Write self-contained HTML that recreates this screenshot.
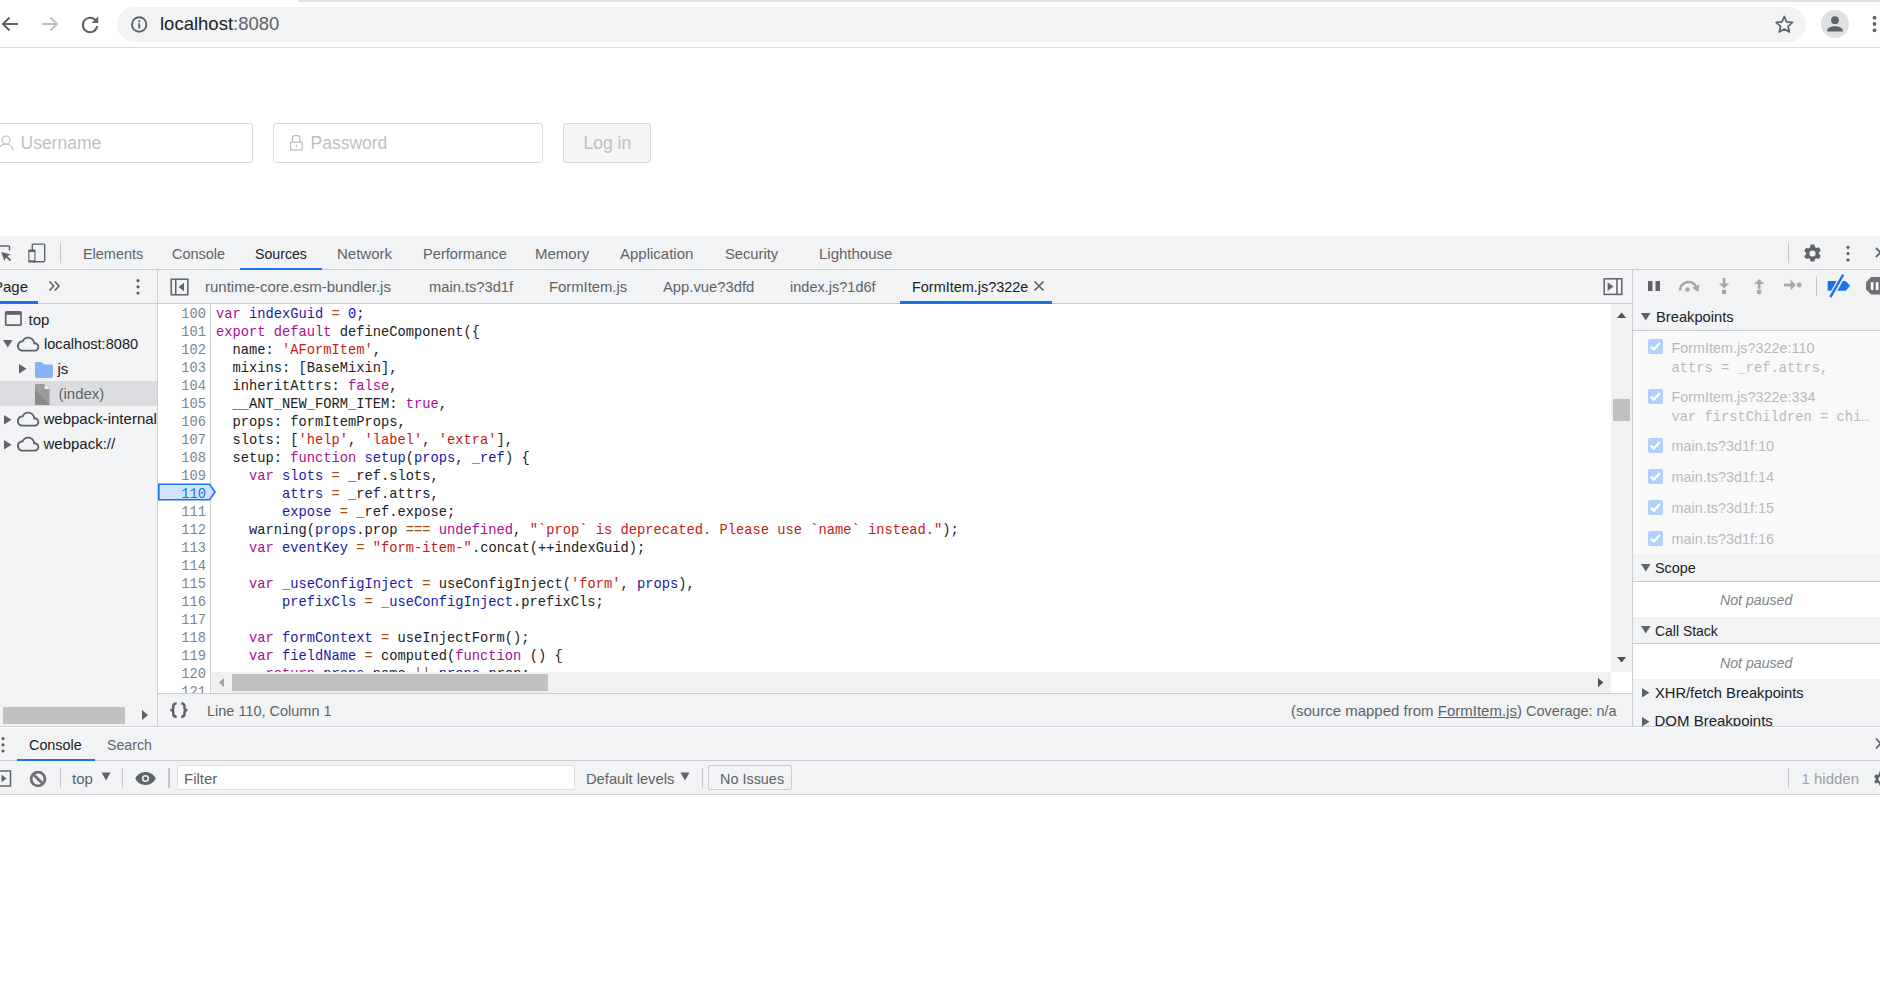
<!DOCTYPE html>
<html><head><meta charset="utf-8"><style>
html,body{margin:0;padding:0;width:1880px;height:986px;overflow:hidden;background:#fff}
.a{position:absolute;box-sizing:border-box}
.s{font-family:"Liberation Sans",sans-serif;white-space:pre}
.m{font-family:"Liberation Mono",monospace;white-space:pre}
svg.a{overflow:visible}
</style></head><body>
<div class="a" style="left:0px;top:0px;width:1880px;height:47px;background:#ffffff;"></div>
<div class="a" style="left:298px;top:0px;width:1582px;height:2px;background:#dee1e6;border-bottom-left-radius:6px;"></div>
<div class="a" style="left:0px;top:47px;width:1880px;height:1px;background:#dadce0;"></div>
<svg class="a" style="left:0px;top:14px;" width="20" height="20" viewBox="0 0 20 20"><path d="M18 10H3.5M9.5 3.5L3 10l6.5 6.5" fill="none" stroke="#5f6368" stroke-width="2"/></svg>
<svg class="a" style="left:40px;top:14px;" width="20" height="20" viewBox="0 0 20 20"><path d="M2 10h14.5M10.5 3.5L17 10l-6.5 6.5" fill="none" stroke="#bdc1c6" stroke-width="2"/></svg>
<svg class="a" style="left:79px;top:14px;" width="22" height="22" viewBox="0 0 22 22"><path d="M17.2 7.2A7.2 7.2 0 1 0 18.2 12" fill="none" stroke="#5f6368" stroke-width="2"/><path d="M19.2 2.5v6.5h-6.5z" fill="#5f6368"/></svg>
<div class="a" style="left:117px;top:7px;width:1689px;height:35px;background:#f1f3f4;border-radius:17.5px;"></div>
<svg class="a" style="left:130px;top:15px;" width="19" height="19" viewBox="0 0 19 19"><circle cx="9.2" cy="9.5" r="7.2" fill="none" stroke="#5f6368" stroke-width="1.9"/><rect x="8.3" y="8.2" width="1.9" height="5.3" fill="#5f6368"/><rect x="8.3" y="5.3" width="1.9" height="1.9" fill="#5f6368"/></svg>
<div class="a s" style="left:160px;top:12.19px;font-size:18.5px;line-height:24px;color:#202124;">localhost<span style="color:#5f6368">:8080</span></div>
<svg class="a" style="left:1773px;top:13px;" width="22" height="22" viewBox="0 0 22 22"><path d="M11.30 3.50L13.59 8.94L19.48 9.44L15.01 13.31L16.35 19.06L11.30 16.00L6.25 19.06L7.59 13.31L3.12 9.44L9.01 8.94z" fill="none" stroke="#5f6368" stroke-width="1.7" stroke-linejoin="round"/></svg>
<svg class="a" style="left:1821px;top:10px;" width="28" height="28" viewBox="0 0 28 28"><circle cx="14" cy="14" r="14" fill="#dfe1e5"/><circle cx="14" cy="10.2" r="3.9" fill="#5f6368"/><path d="M6.2 21.5v-1.2c0-2.6 5.2-4 7.8-4s7.8 1.4 7.8 4v1.2z" fill="#5f6368"/></svg>
<svg class="a" style="left:1870px;top:14px;" width="10" height="22" viewBox="0 0 10 22"><circle cx="4.5" cy="3.7" r="1.9" fill="#5f6368"/><circle cx="4.5" cy="10" r="1.9" fill="#5f6368"/><circle cx="4.5" cy="16.3" r="1.9" fill="#5f6368"/></svg>
<div class="a" style="left:0px;top:48px;width:1880px;height:188px;background:#ffffff;"></div>
<div class="a" style="left:-10px;top:123px;width:263px;height:40px;background:#fff;border:1px solid #d9d9d9;border-radius:3px;box-sizing:border-box"></div>
<div class="a" style="left:273px;top:123px;width:270px;height:40px;background:#fff;border:1px solid #d9d9d9;border-radius:3px;box-sizing:border-box"></div>
<div class="a" style="left:563px;top:123px;width:88px;height:40px;background:#f5f5f5;border:1px solid #d9d9d9;border-radius:3px;box-sizing:border-box"></div>
<svg class="a" style="left:0px;top:135px;" width="14" height="16" viewBox="0 0 14 16"><circle cx="6" cy="5" r="4" fill="none" stroke="#bfbfbf" stroke-width="1.2"/><path d="M-1 15.5c0-4 3-6.3 7-6.3s7 2.3 7 6.3" fill="none" stroke="#bfbfbf" stroke-width="1.2"/></svg>
<svg class="a" style="left:289px;top:135px;" width="15" height="16" viewBox="0 0 15 16"><path d="M3.4 7V3.3c0-1.9 1-2.6 2.4-2.6h2.8c1.4 0 2.4.7 2.4 2.6V7" fill="none" stroke="#bfbfbf" stroke-width="1.2"/><rect x="1.6" y="7.2" width="11.6" height="7.8" fill="none" stroke="#bfbfbf" stroke-width="1.2"/><rect x="6.8" y="9.8" width="1.2" height="2.4" fill="#bfbfbf"/></svg>
<div class="a s" style="left:20.5px;top:132.13px;font-size:17.5px;line-height:23px;color:#bfbfbf;">Username</div>
<div class="a s" style="left:310.5px;top:132.13px;font-size:17.5px;line-height:23px;color:#bfbfbf;">Password</div>
<div class="a s" style="left:583.5px;top:132.13px;font-size:17.5px;line-height:23px;color:#bfbfbf;">Log in</div>
<div class="a" style="left:0px;top:236px;width:1880px;height:559px;background:#f1f3f4;"></div>
<div class="a" style="left:0px;top:269px;width:1880px;height:1px;background:#cacdd1;"></div>
<svg class="a" style="left:0px;top:243px;" width="16" height="20" viewBox="0 0 16 20"><path d="M-2 3h10.6c.6 0 .9.3.9.9v3.6" fill="none" stroke="#5f6368" stroke-width="1.5"/><path d="M1.3 9.1l9.7 2.4-3.6 1.6 3.9 3.9-1.3 1.3-3.9-3.9-1.8 3.6z" fill="#5f6368"/></svg>
<svg class="a" style="left:26px;top:242px;" width="22" height="22" viewBox="0 0 22 22"><rect x="6.3" y="2.1" width="12.4" height="17.6" rx="1" fill="none" stroke="#5f6368" stroke-width="1.4"/><path d="M3.3 7.5h5.2c.6 0 1 .4 1 1v10.9c0 .6-.4 1-1 1H3.3c-.6 0-1-.4-1-1V8.5c0-.6.4-1 1-1z" fill="#5f6368"/><rect x="3.4" y="10.1" width="5" height="8.2" fill="#f1f3f4"/></svg>
<div class="a" style="left:60px;top:243px;width:1px;height:20px;background:#c4c7cc;"></div>
<div class="a s" style="left:83px;top:243.80px;font-size:15px;line-height:20px;color:#5f6368;transform:scaleX(0.962);transform-origin:0 0;">Elements</div>
<div class="a s" style="left:172px;top:243.80px;font-size:15px;line-height:20px;color:#5f6368;transform:scaleX(0.964);transform-origin:0 0;">Console</div>
<div class="a s" style="left:255px;top:243.80px;font-size:15px;line-height:20px;color:#202124;transform:scaleX(0.944);transform-origin:0 0;">Sources</div>
<div class="a s" style="left:337px;top:243.80px;font-size:15px;line-height:20px;color:#5f6368;transform:scaleX(1.0);transform-origin:0 0;">Network</div>
<div class="a s" style="left:423px;top:243.80px;font-size:15px;line-height:20px;color:#5f6368;transform:scaleX(0.976);transform-origin:0 0;">Performance</div>
<div class="a s" style="left:535px;top:243.80px;font-size:15px;line-height:20px;color:#5f6368;transform:scaleX(1.0);transform-origin:0 0;">Memory</div>
<div class="a s" style="left:620px;top:243.80px;font-size:15px;line-height:20px;color:#5f6368;transform:scaleX(1.0);transform-origin:0 0;">Application</div>
<div class="a s" style="left:725px;top:243.80px;font-size:15px;line-height:20px;color:#5f6368;transform:scaleX(0.981);transform-origin:0 0;">Security</div>
<div class="a s" style="left:819px;top:243.80px;font-size:15px;line-height:20px;color:#5f6368;transform:scaleX(1.0);transform-origin:0 0;">Lighthouse</div>
<div class="a" style="left:240px;top:268px;width:82px;height:2px;background:#1a73e8;"></div>
<div class="a" style="left:1788px;top:243px;width:1px;height:20px;background:#c4c7cc;"></div>
<svg class="a" style="left:1803px;top:244px;" width="19" height="19" viewBox="0 0 19 19"><path fill="#5f6368" fill-rule="evenodd" d="M7.6 0.6h3.8l.5 2.5 1.6.9 2.4-.8 1.9 3.3-1.9 1.7v1.8l1.9 1.7-1.9 3.3-2.4-.8-1.6.9-.5 2.5H7.6l-.5-2.5-1.6-.9-2.4.8L1.2 12.2l1.9-1.7V8.7L1.2 7l1.9-3.3 2.4.8 1.6-.9zM9.5 6.4a3.1 3.1 0 1 0 0 6.2 3.1 3.1 0 0 0 0-6.2z"/></svg>
<svg class="a" style="left:1843px;top:244px;" width="10" height="19" viewBox="0 0 10 19"><circle cx="5" cy="3.3" r="1.6" fill="#5f6368"/><circle cx="5" cy="9.6" r="1.6" fill="#5f6368"/><circle cx="5" cy="15.9" r="1.6" fill="#5f6368"/></svg>
<svg class="a" style="left:1870px;top:244px;" width="10" height="19" viewBox="0 0 10 19"><path d="M6 4l9 9M15 4l-9 9" stroke="#5f6368" stroke-width="1.8"/></svg>
<div class="a" style="left:157px;top:270px;width:1px;height:457px;background:#cacdd1;"></div>
<div class="a" style="left:0px;top:303px;width:157px;height:1px;background:#cacdd1;"></div>
<div class="a s" style="left:-7px;top:276.80px;font-size:15px;line-height:20px;color:#202124;">Page</div>
<div class="a" style="left:0px;top:301px;width:38px;height:3px;background:#1a73e8;"></div>
<svg class="a" style="left:48px;top:279px;" width="14" height="14" viewBox="0 0 14 14"><path d="M1.5 2.5l4.2 4.5-4.2 4.5M6.8 2.5L11 7l-4.2 4.5" fill="none" stroke="#5f6368" stroke-width="1.6"/></svg>
<svg class="a" style="left:132px;top:278px;" width="12" height="16" viewBox="0 0 12 16"><circle cx="6" cy="2.6" r="1.6" fill="#5f6368"/><circle cx="6" cy="8.8" r="1.6" fill="#5f6368"/><circle cx="6" cy="15" r="1.6" fill="#5f6368"/></svg>
<div class="a" style="left:0px;top:381px;width:157px;height:25px;background:#dadce0;"></div>
<svg class="a" style="left:4px;top:310px;" width="20" height="18" viewBox="0 0 20 18"><rect x="1.7" y="1.8" width="15.3" height="13.4" rx="1" fill="none" stroke="#5f6368" stroke-width="1.7"/><rect x="1.7" y="1.8" width="15.3" height="3" fill="#5f6368"/></svg>
<div class="a s" style="left:28.5px;top:309.80px;font-size:15px;line-height:20px;color:#202124;">top</div>
<svg class="a" style="left:3px;top:340px;" width="10" height="8" viewBox="0 0 10 8"><path d="M0 0h9.5L4.75 7.5z" fill="#5f6368"/></svg>
<svg class="a" style="left:16.6px;top:332.7px" width="22.3" height="22.3" viewBox="0 0 24 24"><path fill="#5f6368" d="M19.35 10.04C18.67 6.59 15.64 4 12 4 9.11 4 6.6 5.64 5.35 8.04 2.34 8.36 0 10.91 0 14c0 3.31 2.69 6 6 6h13c2.76 0 5-2.24 5-5 0-2.64-2.05-4.78-4.65-4.96zM19 18H6c-2.21 0-4-1.79-4-4s1.79-4 4-4h.71C7.37 7.69 9.48 6 12 6c3.04 0 5.5 2.46 5.5 5.5v.5H19c1.66 0 3 1.34 3 3s-1.34 3-3 3z"/></svg>
<div class="a s" style="left:43.5px;top:334.30px;font-size:15px;line-height:20px;color:#202124;transform:scaleX(0.973);transform-origin:0 0;">localhost:8080</div>
<svg class="a" style="left:19px;top:364px;" width="8" height="10" viewBox="0 0 8 10"><path d="M0 0v9.5L7.5 4.75z" fill="#5f6368"/></svg>
<svg class="a" style="left:35px;top:362px;" width="18" height="17" viewBox="0 0 18 17"><path d="M0 1.2C0 .5.5 0 1.2 0h5.3l2.7 2.6h7.5c.7 0 1.2.5 1.2 1.2v10.9c0 .7-.5 1.2-1.2 1.2H1.2C.5 15.9 0 15.4 0 14.7z" fill="#85b3f5"/></svg>
<div class="a s" style="left:57.5px;top:359.30px;font-size:15px;line-height:20px;color:#202124;">js</div>
<svg class="a" style="left:35px;top:384px;" width="15" height="21" viewBox="0 0 15 21"><path d="M0 1.2C0 .5.5 0 1.2 0h8.4L14.5 4.9v14.9c0 .7-.5 1.2-1.2 1.2H1.2C.5 21 0 20.5 0 19.8z" fill="#9c9c9c"/><path d="M0 5.5L14.5 20v.2c0 .4-.4.8-1 .8H1.2C.5 21 0 20.5 0 19.8z" fill="#8a8a8a"/><path d="M9.6 0v4.9h4.9z" fill="#f2f2f2"/></svg>
<div class="a s" style="left:58.5px;top:384.30px;font-size:15px;line-height:20px;color:#5f6368;">(index)</div>
<svg class="a" style="left:4px;top:415px;" width="8" height="10" viewBox="0 0 8 10"><path d="M0 0v9.5L7.5 4.75z" fill="#5f6368"/></svg>
<svg class="a" style="left:16.6px;top:407.7px" width="22.3" height="22.3" viewBox="0 0 24 24"><path fill="#5f6368" d="M19.35 10.04C18.67 6.59 15.64 4 12 4 9.11 4 6.6 5.64 5.35 8.04 2.34 8.36 0 10.91 0 14c0 3.31 2.69 6 6 6h13c2.76 0 5-2.24 5-5 0-2.64-2.05-4.78-4.65-4.96zM19 18H6c-2.21 0-4-1.79-4-4s1.79-4 4-4h.71C7.37 7.69 9.48 6 12 6c3.04 0 5.5 2.46 5.5 5.5v.5H19c1.66 0 3 1.34 3 3s-1.34 3-3 3z"/></svg>
<div class="a s" style="left:43.5px;top:409.30px;font-size:15px;line-height:20px;color:#202124;width:114px;overflow:hidden">webpack-internal</div>
<svg class="a" style="left:4px;top:440px;" width="8" height="10" viewBox="0 0 8 10"><path d="M0 0v9.5L7.5 4.75z" fill="#5f6368"/></svg>
<svg class="a" style="left:16.6px;top:432.7px" width="22.3" height="22.3" viewBox="0 0 24 24"><path fill="#5f6368" d="M19.35 10.04C18.67 6.59 15.64 4 12 4 9.11 4 6.6 5.64 5.35 8.04 2.34 8.36 0 10.91 0 14c0 3.31 2.69 6 6 6h13c2.76 0 5-2.24 5-5 0-2.64-2.05-4.78-4.65-4.96zM19 18H6c-2.21 0-4-1.79-4-4s1.79-4 4-4h.71C7.37 7.69 9.48 6 12 6c3.04 0 5.5 2.46 5.5 5.5v.5H19c1.66 0 3 1.34 3 3s-1.34 3-3 3z"/></svg>
<div class="a s" style="left:43.5px;top:434.30px;font-size:15px;line-height:20px;color:#202124;">webpack://</div>
<div class="a" style="left:3px;top:707px;width:122px;height:17px;background:#c1c1c1;"></div>
<svg class="a" style="left:141px;top:709px;" width="8" height="12" viewBox="0 0 8 12"><path d="M1 1v10l6-5z" fill="#5f6368"/></svg>
<div class="a" style="left:158px;top:303px;width:1474px;height:1px;background:#cacdd1;"></div>
<svg class="a" style="left:170px;top:278px;" width="20" height="18" viewBox="0 0 20 18"><rect x="1.2" y="1.2" width="16.6" height="15.6" fill="none" stroke="#5f6368" stroke-width="1.5"/><rect x="5" y="1.2" width="1.5" height="15.6" fill="#5f6368"/><path d="M14 4.8v8.4L8.6 9z" fill="#5f6368"/></svg>
<div class="a s" style="left:205px;top:277.30px;font-size:15px;line-height:20px;color:#5f6368;transform:scaleX(1.0);transform-origin:0 0;">runtime-core.esm-bundler.js</div>
<div class="a s" style="left:429px;top:277.30px;font-size:15px;line-height:20px;color:#5f6368;transform:scaleX(0.979);transform-origin:0 0;">main.ts?3d1f</div>
<div class="a s" style="left:549px;top:277.30px;font-size:15px;line-height:20px;color:#5f6368;transform:scaleX(0.987);transform-origin:0 0;">FormItem.js</div>
<div class="a s" style="left:663px;top:277.30px;font-size:15px;line-height:20px;color:#5f6368;transform:scaleX(0.986);transform-origin:0 0;">App.vue?3dfd</div>
<div class="a s" style="left:790px;top:277.30px;font-size:15px;line-height:20px;color:#5f6368;transform:scaleX(0.969);transform-origin:0 0;">index.js?1d6f</div>
<div class="a s" style="left:912px;top:277.30px;font-size:15px;line-height:20px;color:#202124;transform:scaleX(0.963);transform-origin:0 0;">FormItem.js?322e</div>
<div class="a" style="left:900px;top:301px;width:152px;height:3px;background:#1a73e8;"></div>
<svg class="a" style="left:1033px;top:280px;" width="12" height="12" viewBox="0 0 12 12"><path d="M1.5 1.5l9 9M10.5 1.5l-9 9" stroke="#5f6368" stroke-width="1.7"/></svg>
<svg class="a" style="left:1602px;top:277px;" width="22" height="19" viewBox="0 0 22 19"><rect x="2.2" y="1.8" width="17.6" height="15.6" fill="none" stroke="#5f6368" stroke-width="1.5"/><rect x="14.2" y="1.8" width="1.5" height="15.6" fill="#5f6368"/><path d="M5.6 5.3v8.6l5.8-4.3z" fill="#5f6368"/></svg>
<div class="a" style="left:158px;top:304px;width:1453px;height:389px;background:#ffffff;"></div>
<div class="a" style="left:210px;top:304px;width:1px;height:389px;background:#d3d3d3;"></div>
<div class="a" style="left:158px;top:304px;width:1453px;height:368px;overflow:hidden">
<div class="a m" style="left:58px;top:1.84px;font-size:13.75px;line-height:18px;color:#202124;"><span style="color:#aa0d91">var</span> <span style="color:#1a1aa6">indexGuid</span> <span style="color:#a3501e">=</span> <span style="color:#1c00cf">0</span>;</div>
<div class="a m" style="left:58px;top:19.84px;font-size:13.75px;line-height:18px;color:#202124;"><span style="color:#aa0d91">export</span> <span style="color:#aa0d91">default</span> defineComponent({</div>
<div class="a m" style="left:58px;top:37.84px;font-size:13.75px;line-height:18px;color:#202124;">  name: <span style="color:#c41a16">&#x27;AFormItem&#x27;</span>,</div>
<div class="a m" style="left:58px;top:55.84px;font-size:13.75px;line-height:18px;color:#202124;">  mixins: [BaseMixin],</div>
<div class="a m" style="left:58px;top:73.84px;font-size:13.75px;line-height:18px;color:#202124;">  inheritAttrs: <span style="color:#aa0d91">false</span>,</div>
<div class="a m" style="left:58px;top:91.84px;font-size:13.75px;line-height:18px;color:#202124;">  __ANT_NEW_FORM_ITEM: <span style="color:#aa0d91">true</span>,</div>
<div class="a m" style="left:58px;top:109.84px;font-size:13.75px;line-height:18px;color:#202124;">  props: formItemProps,</div>
<div class="a m" style="left:58px;top:127.84px;font-size:13.75px;line-height:18px;color:#202124;">  slots: [<span style="color:#c41a16">&#x27;help&#x27;</span>, <span style="color:#c41a16">&#x27;label&#x27;</span>, <span style="color:#c41a16">&#x27;extra&#x27;</span>],</div>
<div class="a m" style="left:58px;top:145.84px;font-size:13.75px;line-height:18px;color:#202124;">  setup: <span style="color:#aa0d91">function</span> <span style="color:#1a1aa6">setup</span>(<span style="color:#1a1aa6">props</span>, <span style="color:#1a1aa6">_ref</span>) {</div>
<div class="a m" style="left:58px;top:163.84px;font-size:13.75px;line-height:18px;color:#202124;">    <span style="color:#aa0d91">var</span> <span style="color:#1a1aa6">slots</span> <span style="color:#a3501e">=</span> _ref.slots,</div>
<div class="a m" style="left:58px;top:181.84px;font-size:13.75px;line-height:18px;color:#202124;">        <span style="color:#1a1aa6">attrs</span> <span style="color:#a3501e">=</span> _ref.attrs,</div>
<div class="a m" style="left:58px;top:199.84px;font-size:13.75px;line-height:18px;color:#202124;">        <span style="color:#1a1aa6">expose</span> <span style="color:#a3501e">=</span> _ref.expose;</div>
<div class="a m" style="left:58px;top:217.84px;font-size:13.75px;line-height:18px;color:#202124;">    warning(<span style="color:#1a1aa6">props</span>.prop <span style="color:#a3501e">===</span> <span style="color:#aa0d91">undefined</span>, <span style="color:#c41a16">&quot;`prop` is deprecated. Please use `name` instead.&quot;</span>);</div>
<div class="a m" style="left:58px;top:235.84px;font-size:13.75px;line-height:18px;color:#202124;">    <span style="color:#aa0d91">var</span> <span style="color:#1a1aa6">eventKey</span> <span style="color:#a3501e">=</span> <span style="color:#c41a16">&quot;form-item-&quot;</span>.concat(++indexGuid);</div>
<div class="a m" style="left:58px;top:253.84px;font-size:13.75px;line-height:18px;color:#202124;"></div>
<div class="a m" style="left:58px;top:271.84px;font-size:13.75px;line-height:18px;color:#202124;">    <span style="color:#aa0d91">var</span> <span style="color:#1a1aa6">_useConfigInject</span> <span style="color:#a3501e">=</span> useConfigInject(<span style="color:#c41a16">&#x27;form&#x27;</span>, <span style="color:#1a1aa6">props</span>),</div>
<div class="a m" style="left:58px;top:289.84px;font-size:13.75px;line-height:18px;color:#202124;">        <span style="color:#1a1aa6">prefixCls</span> <span style="color:#a3501e">=</span> <span style="color:#1a1aa6">_useConfigInject</span>.prefixCls;</div>
<div class="a m" style="left:58px;top:307.84px;font-size:13.75px;line-height:18px;color:#202124;"></div>
<div class="a m" style="left:58px;top:325.84px;font-size:13.75px;line-height:18px;color:#202124;">    <span style="color:#aa0d91">var</span> <span style="color:#1a1aa6">formContext</span> <span style="color:#a3501e">=</span> useInjectForm();</div>
<div class="a m" style="left:58px;top:343.84px;font-size:13.75px;line-height:18px;color:#202124;">    <span style="color:#aa0d91">var</span> <span style="color:#1a1aa6">fieldName</span> <span style="color:#a3501e">=</span> computed(<span style="color:#aa0d91">function</span> () {</div>
<div class="a m" style="left:58px;top:361.84px;font-size:13.75px;line-height:18px;color:#202124;">      <span style="color:#aa0d91">return</span> <span style="color:#1a1aa6">props</span>.name <span style="color:#a3501e">||</span> <span style="color:#1a1aa6">props</span>.prop;</div>
<div class="a m" style="left:58px;top:379.84px;font-size:13.75px;line-height:18px;color:#202124;"></div>
</div>
<div class="a" style="left:158px;top:304px;width:52px;height:389px;overflow:hidden">
<div class="a m" style="left:23.25px;top:1.84px;font-size:13.75px;line-height:18px;color:#80868b;">100</div>
<div class="a m" style="left:23.25px;top:19.84px;font-size:13.75px;line-height:18px;color:#80868b;">101</div>
<div class="a m" style="left:23.25px;top:37.84px;font-size:13.75px;line-height:18px;color:#80868b;">102</div>
<div class="a m" style="left:23.25px;top:55.84px;font-size:13.75px;line-height:18px;color:#80868b;">103</div>
<div class="a m" style="left:23.25px;top:73.84px;font-size:13.75px;line-height:18px;color:#80868b;">104</div>
<div class="a m" style="left:23.25px;top:91.84px;font-size:13.75px;line-height:18px;color:#80868b;">105</div>
<div class="a m" style="left:23.25px;top:109.84px;font-size:13.75px;line-height:18px;color:#80868b;">106</div>
<div class="a m" style="left:23.25px;top:127.84px;font-size:13.75px;line-height:18px;color:#80868b;">107</div>
<div class="a m" style="left:23.25px;top:145.84px;font-size:13.75px;line-height:18px;color:#80868b;">108</div>
<div class="a m" style="left:23.25px;top:163.84px;font-size:13.75px;line-height:18px;color:#80868b;">109</div>
<div class="a m" style="left:23.25px;top:181.84px;font-size:13.75px;line-height:18px;color:#80868b;">110</div>
<div class="a m" style="left:23.25px;top:199.84px;font-size:13.75px;line-height:18px;color:#80868b;">111</div>
<div class="a m" style="left:23.25px;top:217.84px;font-size:13.75px;line-height:18px;color:#80868b;">112</div>
<div class="a m" style="left:23.25px;top:235.84px;font-size:13.75px;line-height:18px;color:#80868b;">113</div>
<div class="a m" style="left:23.25px;top:253.84px;font-size:13.75px;line-height:18px;color:#80868b;">114</div>
<div class="a m" style="left:23.25px;top:271.84px;font-size:13.75px;line-height:18px;color:#80868b;">115</div>
<div class="a m" style="left:23.25px;top:289.84px;font-size:13.75px;line-height:18px;color:#80868b;">116</div>
<div class="a m" style="left:23.25px;top:307.84px;font-size:13.75px;line-height:18px;color:#80868b;">117</div>
<div class="a m" style="left:23.25px;top:325.84px;font-size:13.75px;line-height:18px;color:#80868b;">118</div>
<div class="a m" style="left:23.25px;top:343.84px;font-size:13.75px;line-height:18px;color:#80868b;">119</div>
<div class="a m" style="left:23.25px;top:361.84px;font-size:13.75px;line-height:18px;color:#80868b;">120</div>
<div class="a m" style="left:23.25px;top:379.84px;font-size:13.75px;line-height:18px;color:#80868b;">121</div>
</div>
<svg class="a" style="left:158px;top:483px;" width="58" height="18" viewBox="0 0 58 18"><path d="M0.8 1.2h50.8l5.4 7.8-5.4 7.8H0.8z" fill="#d2e3fc" stroke="#1a73e8" stroke-width="1.6"/></svg>
<div class="a m" style="left:181.25px;top:485.84px;font-size:13.75px;line-height:18px;color:#1a73e8">110</div>
<div class="a" style="left:1611px;top:304px;width:21px;height:368px;background:#f1f1f1;"></div>
<div class="a" style="left:1613px;top:399px;width:17px;height:22px;background:#c1c1c1;"></div>
<svg class="a" style="left:1617px;top:312px;" width="10" height="7" viewBox="0 0 10 7"><path d="M0 6h9.2L4.6 0.6z" fill="#505050"/></svg>
<svg class="a" style="left:1617px;top:657px;" width="10" height="7" viewBox="0 0 10 7"><path d="M0 0h9.2L4.6 5.4z" fill="#505050"/></svg>
<div class="a" style="left:211px;top:672px;width:1400px;height:21px;background:#f1f1f1;"></div>
<div class="a" style="left:232px;top:674px;width:316px;height:17px;background:#c1c1c1;"></div>
<svg class="a" style="left:218px;top:678px;" width="7" height="10" viewBox="0 0 7 10"><path d="M6 0v9.2L0.8 4.6z" fill="#a3a3a3"/></svg>
<svg class="a" style="left:1598px;top:678px;" width="7" height="10" viewBox="0 0 7 10"><path d="M0 0v9.2L5.4 4.6z" fill="#505050"/></svg>
<div class="a" style="left:1611px;top:672px;width:21px;height:21px;background:#ffffff;"></div>
<div class="a" style="left:158px;top:693px;width:1474px;height:1px;background:#cacdd1;"></div>
<div class="a" style="left:0px;top:726px;width:1880px;height:1px;background:#cacdd1;"></div>
<div class="a" style="left:0px;top:727px;width:1880px;height:1px;background:#ffffff;"></div>
<svg class="a" style="left:166px;top:700px;" width="26" height="20" viewBox="0 0 26 20"><path d="M10.6 3.5c-2.4 0-3.3.9-3.3 2.7v2.1c0 1.2-.8 1.8-3 1.8 2.2 0 3 .6 3 1.8v2.1c0 1.8.9 2.7 3.3 2.7M15.2 3.5c2.4 0 3.3.9 3.3 2.7v2.1c0 1.2.8 1.8 3 1.8-2.2 0-3 .6-3 1.8v2.1c0 1.8-.9 2.7-3.3 2.7" fill="none" stroke="#5f6368" stroke-width="2.5"/></svg>
<div class="a s" style="left:207px;top:700.80px;font-size:15px;line-height:20px;color:#5f6368;transform:scaleX(0.966);transform-origin:0 0;">Line 110, Column 1</div>
<div class="a s" style="left:1291px;top:700.80px;font-size:15px;line-height:20px;color:#5f6368;">(source mapped from <span style="text-decoration:underline">FormItem.js</span>)</div>
<div class="a s" style="left:1526px;top:700.80px;font-size:15px;line-height:20px;color:#5f6368;transform:scaleX(0.962);transform-origin:0 0;">Coverage: n/a</div>
<div class="a" style="left:1632px;top:270px;width:1px;height:457px;background:#cacdd1;"></div>
<svg class="a" style="left:1646px;top:279px;" width="16" height="14" viewBox="0 0 16 14"><rect x="2" y="2" width="4.5" height="10" fill="#5f6368"/><rect x="9.5" y="2" width="4.5" height="10" fill="#5f6368"/></svg>
<svg class="a" style="left:1677px;top:278px;" width="26" height="16" viewBox="0 0 26 16"><path d="M3 12.5A8.5 8.5 0 0 1 19 8.5" fill="none" stroke="#a8a8a8" stroke-width="2.6"/><path d="M22.5 6.5l-1.2 7.5-6.3-4.2z" fill="#a8a8a8"/><circle cx="10.5" cy="11.5" r="2.3" fill="#a8a8a8"/></svg>
<svg class="a" style="left:1717px;top:277px;" width="14" height="19" viewBox="0 0 14 19"><rect x="5.8" y="1" width="2.6" height="8" fill="#a8a8a8"/><path d="M2 6.5h10.2L7.1 11.5z" fill="#a8a8a8"/><circle cx="7.1" cy="15" r="2.4" fill="#a8a8a8"/></svg>
<svg class="a" style="left:1752px;top:277px;" width="14" height="19" viewBox="0 0 14 19"><rect x="5.8" y="5" width="2.6" height="7" fill="#a8a8a8"/><path d="M2 7h10.2L7.1 2z" fill="#a8a8a8"/><circle cx="7.1" cy="15" r="2.4" fill="#a8a8a8"/></svg>
<svg class="a" style="left:1783px;top:278px;" width="20" height="14" viewBox="0 0 20 14"><rect x="1" y="5.6" width="8" height="2.8" fill="#a8a8a8"/><path d="M7.5 1.5L13 7l-5.5 5.5z" fill="#a8a8a8"/><circle cx="16.3" cy="7" r="2.4" fill="#a8a8a8"/></svg>
<div class="a" style="left:1816px;top:276px;width:1px;height:20px;background:#c4c7cc;"></div>
<svg class="a" style="left:1826px;top:274px;" width="26" height="24" viewBox="0 0 26 24"><path d="M1.7 7H19.4L24.2 11.8L19.7 16.85H1.7Z" fill="#1a73e8"/><path d="M16.8 1.2L5.2 22.4" stroke="#f1f3f4" stroke-width="5.4"/><path d="M16.6 1.6L5 22" stroke="#1a73e8" stroke-width="2.4" stroke-linecap="square"/></svg>
<svg class="a" style="left:1866px;top:277px;" width="20" height="18" viewBox="0 0 20 18"><path d="M5.2 0h8.6l5.2 5.2v7.4L13.8 17.6H5.2L0 12.6V5.2z" fill="#6f7175"/><rect x="4.8" y="5.2" width="2.6" height="7.8" fill="#fff"/><rect x="9.8" y="5.2" width="2.6" height="7.8" fill="#fff"/></svg>
<div class="a" style="left:1633px;top:330px;width:247px;height:1px;background:#cacdd1;"></div>
<svg class="a" style="left:1641px;top:313px;" width="10" height="8" viewBox="0 0 10 8"><path d="M0 0h9.5L4.75 7.5z" fill="#5f6368"/></svg>
<div class="a s" style="left:1655.5px;top:306.80px;font-size:15px;line-height:20px;color:#202124;transform:scaleX(0.98);transform-origin:0 0;">Breakpoints</div>
<div class="a" style="left:1633px;top:331px;width:247px;height:223px;background:#f9f9fa;"></div>
<svg class="a" style="left:1648px;top:339px;" width="15" height="15" viewBox="0 0 15 15"><rect x="0" y="0" width="15" height="15" rx="2" fill="#b1d0fb"/><path d="M2.8 7.6l3 3 6-6.6" fill="none" stroke="#fff" stroke-width="2.4"/></svg>
<div class="a s" style="left:1671.5px;top:338.51px;font-size:14.4px;line-height:19px;color:#b9b9b9;">FormItem.js?322e:110</div>
<div class="a m" style="left:1671.5px;top:360.34px;font-size:13.75px;line-height:18px;color:#b9b9b9;">attrs = _ref.attrs,</div>
<svg class="a" style="left:1648px;top:389px;" width="15" height="15" viewBox="0 0 15 15"><rect x="0" y="0" width="15" height="15" rx="2" fill="#b1d0fb"/><path d="M2.8 7.6l3 3 6-6.6" fill="none" stroke="#fff" stroke-width="2.4"/></svg>
<div class="a s" style="left:1671.5px;top:387.51px;font-size:14.4px;line-height:19px;color:#b9b9b9;">FormItem.js?322e:334</div>
<div class="a m" style="left:1671.5px;top:409.34px;font-size:13.75px;line-height:18px;color:#b9b9b9;">var firstChildren = chi…</div>
<svg class="a" style="left:1648px;top:438px;" width="15" height="15" viewBox="0 0 15 15"><rect x="0" y="0" width="15" height="15" rx="2" fill="#b1d0fb"/><path d="M2.8 7.6l3 3 6-6.6" fill="none" stroke="#fff" stroke-width="2.4"/></svg>
<div class="a s" style="left:1671.5px;top:437.01px;font-size:14.4px;line-height:19px;color:#b9b9b9;">main.ts?3d1f:10</div>
<svg class="a" style="left:1648px;top:469px;" width="15" height="15" viewBox="0 0 15 15"><rect x="0" y="0" width="15" height="15" rx="2" fill="#b1d0fb"/><path d="M2.8 7.6l3 3 6-6.6" fill="none" stroke="#fff" stroke-width="2.4"/></svg>
<div class="a s" style="left:1671.5px;top:468.01px;font-size:14.4px;line-height:19px;color:#b9b9b9;">main.ts?3d1f:14</div>
<svg class="a" style="left:1648px;top:500px;" width="15" height="15" viewBox="0 0 15 15"><rect x="0" y="0" width="15" height="15" rx="2" fill="#b1d0fb"/><path d="M2.8 7.6l3 3 6-6.6" fill="none" stroke="#fff" stroke-width="2.4"/></svg>
<div class="a s" style="left:1671.5px;top:499.01px;font-size:14.4px;line-height:19px;color:#b9b9b9;">main.ts?3d1f:15</div>
<svg class="a" style="left:1648px;top:531px;" width="15" height="15" viewBox="0 0 15 15"><rect x="0" y="0" width="15" height="15" rx="2" fill="#b1d0fb"/><path d="M2.8 7.6l3 3 6-6.6" fill="none" stroke="#fff" stroke-width="2.4"/></svg>
<div class="a s" style="left:1671.5px;top:530.01px;font-size:14.4px;line-height:19px;color:#b9b9b9;">main.ts?3d1f:16</div>
<div class="a" style="left:1633px;top:581px;width:247px;height:1px;background:#cacdd1;"></div>
<svg class="a" style="left:1641px;top:564px;" width="10" height="8" viewBox="0 0 10 8"><path d="M0 0h9.5L4.75 7.5z" fill="#5f6368"/></svg>
<div class="a s" style="left:1654.5px;top:557.80px;font-size:15px;line-height:20px;color:#202124;transform:scaleX(0.961);transform-origin:0 0;">Scope</div>
<div class="a" style="left:1633px;top:582px;width:247px;height:35px;background:#ffffff;"></div>
<div class="a s" style="left:1720px;top:589.80px;font-size:15px;line-height:20px;color:#80868b;font-style:italic;transform:scaleX(0.942);transform-origin:0 0;">Not paused</div>
<div class="a" style="left:1633px;top:643px;width:247px;height:1px;background:#cacdd1;"></div>
<svg class="a" style="left:1641px;top:626px;" width="10" height="8" viewBox="0 0 10 8"><path d="M0 0h9.5L4.75 7.5z" fill="#5f6368"/></svg>
<div class="a s" style="left:1654.5px;top:620.80px;font-size:15px;line-height:20px;color:#202124;transform:scaleX(0.93);transform-origin:0 0;">Call Stack</div>
<div class="a" style="left:1633px;top:644px;width:247px;height:35px;background:#ffffff;"></div>
<div class="a s" style="left:1720px;top:652.80px;font-size:15px;line-height:20px;color:#80868b;font-style:italic;transform:scaleX(0.942);transform-origin:0 0;">Not paused</div>
<svg class="a" style="left:1642px;top:688px;" width="8" height="10" viewBox="0 0 8 10"><path d="M0 0v9.5L7.5 4.75z" fill="#5f6368"/></svg>
<div class="a s" style="left:1654.5px;top:682.80px;font-size:15px;line-height:20px;color:#202124;transform:scaleX(0.98);transform-origin:0 0;">XHR/fetch Breakpoints</div>
<div class="a" style="left:1633px;top:706px;width:247px;height:20px;overflow:hidden">
<svg class="a" style="left:9px;top:11px;" width="8" height="10" viewBox="0 0 8 10"><path d="M0 0v9.5L7.5 4.75z" fill="#5f6368"/></svg>
<div class="a s" style="left:21.5px;top:5.30px;font-size:15px;line-height:20px;color:#202124;">DOM Breakpoints</div>
</div>
<div class="a" style="left:0px;top:760px;width:1880px;height:1px;background:#cacdd1;"></div>
<div class="a" style="left:0px;top:794px;width:1880px;height:1px;background:#cacdd1;"></div>
<svg class="a" style="left:0px;top:736px;" width="8" height="18" viewBox="0 0 8 18"><circle cx="3" cy="2.6" r="1.6" fill="#5f6368"/><circle cx="3" cy="8.8" r="1.6" fill="#5f6368"/><circle cx="3" cy="15" r="1.6" fill="#5f6368"/></svg>
<div class="a s" style="left:29px;top:734.80px;font-size:15px;line-height:20px;color:#202124;transform:scaleX(0.958);transform-origin:0 0;">Console</div>
<div class="a s" style="left:106.5px;top:734.80px;font-size:15px;line-height:20px;color:#5f6368;transform:scaleX(0.943);transform-origin:0 0;">Search</div>
<div class="a" style="left:17px;top:759px;width:78px;height:2px;background:#1a73e8;"></div>
<svg class="a" style="left:1870px;top:737px;" width="10" height="14" viewBox="0 0 10 14"><path d="M6 1.5l9 10M15 1.5l-9 10" stroke="#5f6368" stroke-width="1.8"/></svg>
<svg class="a" style="left:-6px;top:770px;" width="18" height="17" viewBox="0 0 18 17"><rect x="1" y="1" width="15.5" height="15" fill="none" stroke="#5f6368" stroke-width="1.5"/><path d="M7.5 4.8v7.4l5.1-3.7z" fill="#5f6368"/></svg>
<svg class="a" style="left:29px;top:770px;" width="18" height="18" viewBox="0 0 18 18"><circle cx="9" cy="9" r="6.9" fill="none" stroke="#6f7175" stroke-width="2.8"/><path d="M4.2 4.2l9.6 9.6" stroke="#6f7175" stroke-width="2.8"/></svg>
<div class="a" style="left:60px;top:768px;width:1px;height:20px;background:#c4c7cc;"></div>
<div class="a s" style="left:72px;top:768.80px;font-size:15px;line-height:20px;color:#5f6368;">top</div>
<svg class="a" style="left:101px;top:772px;" width="10" height="9" viewBox="0 0 10 9"><path d="M0.5 0.5h9L5 8.5z" fill="#5f6368"/></svg>
<div class="a" style="left:122px;top:768px;width:1px;height:20px;background:#c4c7cc;"></div>
<svg class="a" style="left:134px;top:771px;" width="23" height="15" viewBox="0 0 23 15"><path d="M11.5 1C6.5 1 2.8 4.2 1.3 7.5c1.5 3.3 5.2 6.5 10.2 6.5s8.7-3.2 10.2-6.5C20.2 4.2 16.5 1 11.5 1z" fill="#5f6368"/><circle cx="11.5" cy="7.5" r="3.6" fill="#f1f3f4"/><circle cx="11.5" cy="7.5" r="2" fill="#5f6368"/></svg>
<div class="a" style="left:168px;top:768px;width:2px;height:20px;background:#c4c7cc;"></div>
<div class="a" style="left:177px;top:765px;width:398px;height:25px;background:#fff;border:1px solid #e0e0e0"></div>
<div class="a s" style="left:184px;top:768.80px;font-size:15px;line-height:20px;color:#5f6368;">Filter</div>
<div class="a s" style="left:586px;top:768.80px;font-size:15px;line-height:20px;color:#5f6368;transform:scaleX(0.98);transform-origin:0 0;">Default levels</div>
<svg class="a" style="left:680px;top:772px;" width="10" height="9" viewBox="0 0 10 9"><path d="M0.5 0.5h9L5 8.5z" fill="#5f6368"/></svg>
<div class="a" style="left:702px;top:768px;width:1px;height:20px;background:#c4c7cc;"></div>
<div class="a" style="left:708px;top:765px;width:84px;height:25px;border:1px solid #cacdd1;border-radius:2px"></div>
<div class="a s" style="left:720px;top:768.80px;font-size:15px;line-height:20px;color:#5f6368;transform:scaleX(0.961);transform-origin:0 0;">No Issues</div>
<div class="a" style="left:1788px;top:768px;width:1px;height:20px;background:#c4c7cc;"></div>
<div class="a s" style="left:1801.5px;top:768.80px;font-size:15px;line-height:20px;color:#9aa0a6;">1 hidden</div>
<svg class="a" style="left:1873px;top:771px;" width="16" height="16" viewBox="0 0 16 16"><path fill="#5f6368" fill-rule="evenodd" d="M6.4 0.5h3.2l.4 2.1 1.3.7 2-.7 1.6 2.8-1.6 1.4v1.5l1.6 1.4-1.6 2.8-2-.7-1.3.7-.4 2.1H6.4l-.4-2.1-1.3-.7-2 .7L1.1 10.4l1.6-1.4V7.5L1.1 6.1l1.6-2.8 2 .7 1.3-.7zM8 5.4a2.6 2.6 0 1 0 0 5.2 2.6 2.6 0 0 0 0-5.2z"/></svg>
</body></html>
